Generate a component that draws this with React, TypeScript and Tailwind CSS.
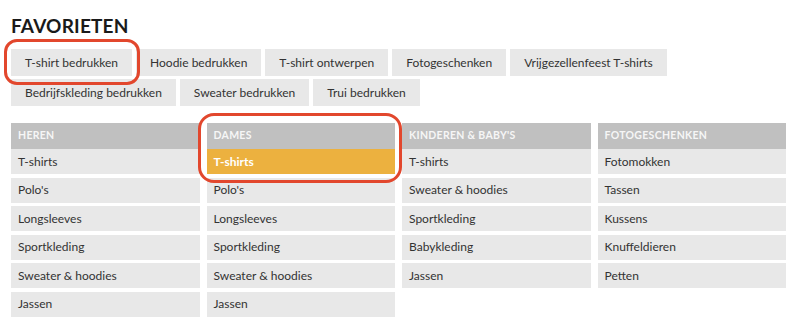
import React from "react";

const favorites = [
  "T-shirt bedrukken",
  "Hoodie bedrukken",
  "T-shirt ontwerpen",
  "Fotogeschenken",
  "Vrijgezellenfeest T-shirts",
  "Bedrijfskleding bedrukken",
  "Sweater bedrukken",
  "Trui bedrukken",
];

const categories = [
  {
    title: "Heren",
    items: ["T-shirts", "Polo's", "Longsleeves", "Sportkleding", "Sweater & hoodies", "Jassen"],
  },
  {
    title: "Dames",
    active: "T-shirts",
    items: ["T-shirts", "Polo's", "Longsleeves", "Sportkleding", "Sweater & hoodies", "Jassen"],
  },
  {
    title: "Kinderen & baby's",
    items: ["T-shirts", "Sweater & hoodies", "Sportkleding", "Babykleding", "Jassen"],
  },
  {
    title: "Fotogeschenken",
    items: ["Fotomokken", "Tassen", "Kussens", "Knuffeldieren", "Petten"],
  },
];

export default function App() {
  return (
    <div
      className="relative w-[800px] h-[331px] bg-white pl-[11px] pr-[14px] pt-[15px] text-[#333]"
      style={{ fontFamily: "Lato, 'Liberation Sans', sans-serif" }}
    >
      <h1 className="text-[19px] leading-[22px] font-bold text-[#1a1a1a] tracking-[0.2px]">FAVORIETEN</h1>

      <div className="mt-[12px] flex flex-wrap gap-x-[4px] gap-y-[3px]">
        {favorites.map((f) => (
          <a
            key={f}
            className="h-[27px] px-[14px] flex items-center bg-[#e8e8e8] text-[12px] text-[#333]"
          >
            {f}
          </a>
        ))}
      </div>

      <div className="mt-[17px] grid grid-cols-4 gap-x-[7px] items-start">
        {categories.map((cat) => (
          <div key={cat.title} className="flex flex-col">
            <div className="h-[26px] flex items-center px-[7px] bg-[#c0c0c0] text-[10.5px] font-bold uppercase tracking-[0.3px] text-[#f6f6f6]">
              {cat.title}
            </div>
            <ul className="flex flex-col gap-[3.6px]">
              {cat.items.map((item) => {
                const isActive = cat.active === item;
                return (
                  <li
                    key={item}
                    className={
                      isActive
                        ? "h-[25px] flex items-center px-[7px] bg-[#ecb13f] text-[12px] font-bold text-white"
                        : "h-[25px] flex items-center px-[7px] bg-[#e8e8e8] text-[12px] text-[#333]"
                    }
                  >
                    {item}
                  </li>
                );
              })}
            </ul>
          </div>
        ))}
      </div>

      {/* annotation rings */}
      <div className="absolute left-[4px] top-[39px] w-[136px] h-[46px] border-[3px] border-[#e2472d] rounded-[13px] pointer-events-none" />
      <div className="absolute left-[198px] top-[113px] w-[204px] h-[70px] border-[3px] border-[#e2472d] rounded-[16px] pointer-events-none" />
    </div>
  );
}
